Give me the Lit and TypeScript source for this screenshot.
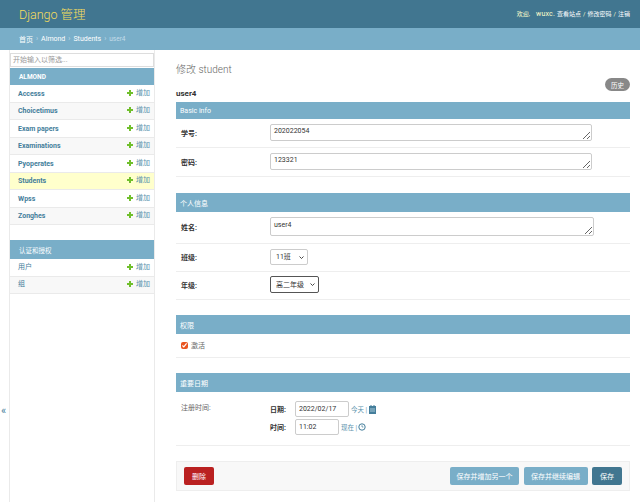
import { LitElement, html, css } from 'lit';
import { customElement } from 'lit/decorators.js';

const almond = ['Accesss', 'Choicetimus', 'Exam papers', 'Examinations', 'Pyoperates', 'Students', 'Wpss', 'Zonghes'];
const auth = ['用户', '组'];

@customElement('app-root')
export class AppRoot extends LitElement {
  static styles = css`
    :host {
      display: block;
      width: 640px;
      height: 502px;
      overflow: hidden;
      background: #fff;
      color: #333;
      font-family: Roboto, "Noto Sans CJK SC", sans-serif;
      font-size: 7px;
    }
    a { color: inherit; text-decoration: none; }
    .header {
      height: 28px;
      box-sizing: border-box;
      background: #417690;
      color: #ffc;
      display: flex;
      align-items: center;
      justify-content: space-between;
      padding: 0 10px 0 19px;
    }
    .brand { font-size: 12.5px; color: #f5dd5d; font-weight: 300; padding-bottom: 1px; }
    .user { font-size: 6px; color: #ffc; padding-bottom: 1px; display: flex; align-items: center; gap: 2px; }
    .user a { color: #fff; }
    .user .name { font-size: 7px; letter-spacing: 0.2px; margin: 0 0 0 4px; }
    .crumbs {
      height: 22px;
      box-sizing: border-box;
      background: #79aec8;
      color: #c4dce8;
      display: flex;
      align-items: center;
      gap: 3px;
      padding: 0 0 0 19px;
    }
    .crumbs a { color: #fff; }
    .crumbs .now { font-size: 6.5px; }
    .body { display: flex; height: 452px; }
    .toggle {
      width: 9px;
      color: #447e9b;
      font-size: 11px;
      display: flex;
      align-items: flex-end;
      justify-content: flex-start;
      padding: 0 0 85px 1px;
      box-sizing: border-box;
      flex: none;
    }
    .side {
      width: 146px;
      box-sizing: border-box;
      border-left: 1px solid #eaeaea;
      border-right: 1px solid #eaeaea;
      padding-top: 3px;
      flex: none;
    }
    .filter {
      display: block;
      width: 144px;
      height: 14px;
      box-sizing: border-box;
      border: 1px solid #ddd;
      padding: 0 2px;
      color: #999;
      line-height: 12px;
      margin-bottom: 1px;
      white-space: nowrap;
    }
    .mod-head {
      height: 17px;
      background: #79aec8;
      color: #fff;
      display: flex;
      align-items: center;
      padding-left: 9px;
      font-size: 6.5px;
      font-weight: 700;
      margin-top: 1px;
    }
    .mod-head.plain { height: 19px; font-weight: 400; margin-top: 15px; padding-top: 1px; box-sizing: border-box; }
    .row {
      height: 17.5px;
      box-sizing: border-box;
      display: flex;
      align-items: center;
      justify-content: space-between;
      padding: 1px 4px 0 8px;
      border-bottom: 1px solid #eaeaea;
      font-weight: 700;
      color: #447e9b;
    }
    .row a { display: block; line-height: 8px; }
    .row.cjk a { margin-top: -2px; font-weight: 400; }
    .row:nth-child(even) { background: #f8f8f8; }
    .row.current { background: #ffc; }
    .add { font-weight: 400; color: #5d93ad; display: flex; align-items: center; gap: 3px; line-height: 8px; margin-top: -2px; }
    .main { flex: 1; padding: 0 10px 0 21px; min-width: 0; }
    h1 { margin: 0; font-size: 10px; font-weight: 300; color: #666; padding-top: 11px; height: 17px; }
    .title-row { display: flex; justify-content: space-between; height: 24px; }
    .tools {
      width: 25px;
      height: 13px;
      border-radius: 7px;
      background: #888;
      color: #fff;
      font-size: 6.5px;
      display: flex;
      align-items: center;
      justify-content: center;
    }
    h2 { margin: 11px 0 0; font-size: 8px; font-weight: 700; color: #333; height: 10px; line-height: 10px; }
    h3 {
      margin: 0;
      background: #79aec8;
      color: #fff;
      font-size: 7px;
      font-weight: 400;
      display: flex;
      align-items: center;
      padding-left: 4px;
      height: 19px;
    }
    h3.first { height: 17px; }
    fieldset { border: 0; margin: 0 0 15px; padding: 0; }
    fieldset.basic { margin-bottom: 16px; }
    .field {
      display: flex;
      box-sizing: border-box;
      border-bottom: 1px solid #eee;
      padding: 5px 0 6px 5px;
      align-items: center;
    }
    .field.name { padding-bottom: 7px; }
    .field.tight { padding-top: 4px; }
    .field label { width: 89px; flex: none; font-weight: 700; }
    textarea {
      display: block;
      box-sizing: border-box;
      border: 1px solid #ccc;
      border-radius: 2px;
      padding: 2px 3px;
      font: inherit;
      color: #333;
      width: 322px;
      height: 17px;
      margin: 0;
      overflow: hidden;
      background: #fff;
    }
    textarea.tall { width: 324px; height: 19px; padding-top: 3px; }
    select {
      appearance: none;
      box-sizing: border-box;
      height: 16px;
      border: 1px solid #ccc;
      border-radius: 2px;
      background: #fff url("data:image/svg+xml,%3Csvg xmlns='http://www.w3.org/2000/svg' width='5' height='3'%3E%3Cpath d='M.5.5l2 2 2-2' fill='none' stroke='%23333' stroke-width='.9'/%3E%3C/svg%3E") no-repeat right 3px center;
      font: inherit;
      color: #333;
      padding: 0 8px 0 5px;
      margin: 0;
    }
    select.focus { border-color: #555; height: 17px; width: 49px; }
    .check {
      display: flex;
      align-items: center;
      gap: 3px;
      height: 24px;
      padding: 0 0 1px 5px;
      box-sizing: border-box;
      border-bottom: 1px solid #eee;
      color: #666;
    }
    .check input { width: 7px; height: 7px; margin: 0; accent-color: #e95420; }
    .dates { display: flex; height: 54px; box-sizing: border-box; border-bottom: 1px solid #eee; padding: 9px 0 0 5px; }
    .dates .cap { width: 89px; color: #666; flex: none; padding-top: 1px; }
    .dt { display: flex; align-items: center; height: 16px; margin-bottom: 2px; }
    .dt b { width: 25px; flex: none; }
    .dt input {
      box-sizing: border-box;
      border: 1px solid #ccc;
      border-radius: 2px;
      font: inherit;
      color: #333;
      height: 16px;
      padding: 0 3px;
      margin: 0;
    }
    .dt .link { color: #5d93ad; margin-left: 2px; display: flex; align-items: center; gap: 1px; font-size: 6.5px; }
    .submit {
      height: 30px;
      box-sizing: border-box;
      background: #f8f8f8;
      border: 1px solid #eee;
      display: flex;
      align-items: center;
      gap: 4.5px;
      padding: 0 7px;
    }
    .btn {
      height: 18px;
      border-radius: 2px;
      color: #fff;
      background: #79aec8;
      display: flex;
      align-items: center;
      justify-content: center;
    }
    .del { background: #ba2121; width: 30px; margin-right: auto; }
    .save { background: #417690; width: 30px; }
  `;

  private plus() {
    return html`<svg width="6" height="6" viewBox="0 0 6 6"><path d="M2 0h2v2h2v2H4v2H2V4H0V2h2z" fill="#70bf2b"/></svg>`;
  }

  private moduleRow(name: string, extra = '') {
    return html`<div class="row ${extra}">
      <a>${name}</a><span class="add">${this.plus()}增加</span>
    </div>`;
  }

  render() {
    return html`
      <div class="header">
        <div class="brand">Django 管理</div>
        <div class="user">欢迎,<span class="name">wuxc.</span><a>查看站点</a>/<a>修改密码</a>/<a>注销</a></div>
      </div>
      <div class="crumbs"><a>首页</a>›<a>Almond</a>›<a>Students</a>›<span class="now">user4</span></div>
      <div class="body">
        <div class="toggle">«</div>
        <div class="side">
          <div class="filter">开始输入以筛选...</div>
          <div class="mod-head">ALMOND</div>
          <div>${almond.map((m) => this.moduleRow(m, m === 'Students' ? 'current' : ''))}</div>
          <div class="mod-head plain">认证和授权</div>
          <div>${auth.map((m) => this.moduleRow(m, 'cjk'))}</div>
        </div>
        <div class="main">
          <h1>修改 student</h1>
          <div class="title-row"><h2>user4</h2><a class="tools">历史</a></div>
          <fieldset class="basic">
            <h3 class="first">Basic info</h3>
            <div class="field"><label>学号:</label><textarea>202022054</textarea></div>
            <div class="field"><label>密码:</label><textarea>123321</textarea></div>
          </fieldset>
          <fieldset>
            <h3>个人信息</h3>
            <div class="field name"><label>姓名:</label><textarea class="tall">user4</textarea></div>
            <div class="field"><label>班级:</label><select style="width:38px"><option>11班</option></select></div>
            <div class="field tight"><label>年级:</label><select class="focus"><option>高二年级</option></select></div>
          </fieldset>
          <fieldset>
            <h3>权限</h3>
            <label class="check"><input type="checkbox" checked />激活</label>
          </fieldset>
          <fieldset>
            <h3>重要日期</h3>
            <div class="dates">
              <div class="cap">注册时间:</div>
              <div>
                <div class="dt">
                  <b>日期:</b><input style="width:54px" value="2022/02/17" />
                  <span class="link">今天 |
                    <svg width="9" height="9" viewBox="0 0 9 9"><path d="M1 1h1.5V0h1v1h2V0h1v1H8v8H1z" fill="#447e9b"/><path d="M2 3.5h5v1H2zM2 5.5h5v1H2z" fill="#a8c8d8"/></svg>
                  </span>
                </div>
                <div class="dt">
                  <b>时间:</b><input style="width:44px" value="11:02" />
                  <span class="link">现在 |
                    <svg width="8" height="8" viewBox="0 0 8 8"><circle cx="4" cy="4" r="3.2" fill="none" stroke="#447e9b"/><path d="M4 2.2V4h1.4" fill="none" stroke="#447e9b" stroke-width=".7"/></svg>
                  </span>
                </div>
              </div>
            </div>
          </fieldset>
          <div class="submit">
            <a class="btn del">删除</a>
            <a class="btn" style="width:69px">保存并增加另一个</a>
            <a class="btn" style="width:64px">保存并继续编辑</a>
            <a class="btn save">保存</a>
          </div>
        </div>
      </div>
    `;
  }
}
